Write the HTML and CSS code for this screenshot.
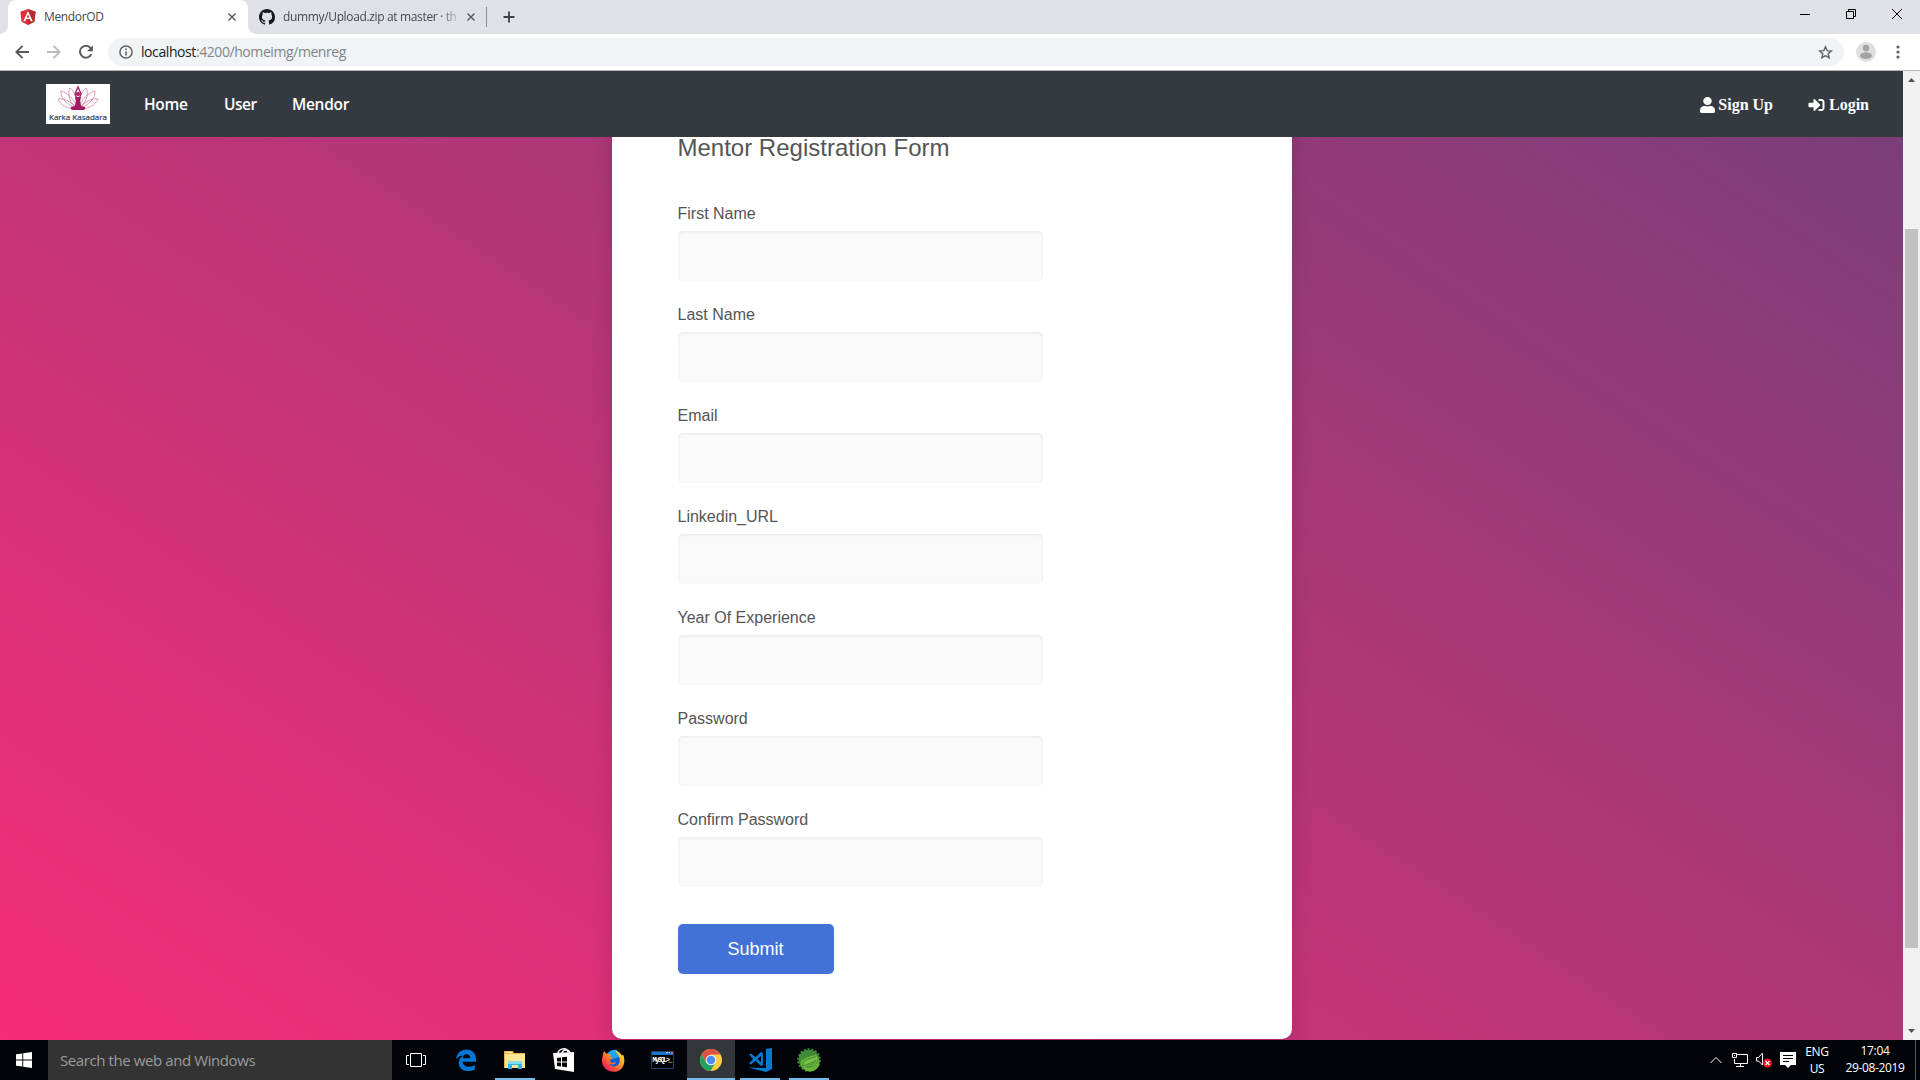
FILE: index.html
```html
<!DOCTYPE html>
<html lang="en">
<head>
<meta charset="utf-8">
<title>MendorOD</title>
<link rel="stylesheet" href="styles.css">
</head>
<body>
<div class="screen">
  <div class="tabstrip">
    <div class="tab tab-active">
      <svg class="ic16" viewBox="0 0 16 16"><path fill="#dd3038" d="M8 0l7.6 2.7-1.2 10L8 16l-6.4-3.3-1.2-10z"/><path fill="#b52e31" d="M8 0l7.6 2.7-1.2 10L8 16z"/><path fill="#fff" fill-rule="evenodd" d="M8 2l4.7 10.2h-1.9l-.9-2.3H6.1l-.9 2.3H3.300zM8 5.300L6.700 8.400h2.600z"/></svg>
      <span class="tab-title t1">MendorOD</span>
      <svg class="close" viewBox="0 0 8 8"><path d="M.5.5l7 7m0-7l-7 7"/></svg>
    </div>
    <div class="tab tab-idle">
      <svg class="ic16" viewBox="0 0 16 16"><path fill="#17191c" fill-rule="evenodd" d="M8 0C3.580 0 0 3.580 0 8c0 3.540 2.290 6.530 5.470 7.590.4.070.55-.17.55-.38 0-.19-.01-.82-.01-1.490-2.010.37-2.530-.49-2.690-.94-.09-.23-.48-.94-.82-1.130-.28-.15-.68-.52-.01-.53.63-.01 1.080.58 1.230.82.72 1.210 1.870.87 2.330.66.070-.52.28-.87.51-1.070-1.780-.2-3.640-.89-3.640-3.950 0-.87.31-1.590.82-2.150-.08-.2-.36-1.020.080-2.120 0 0 .67-.21 2.200.82.64-.18 1.320-.27 2-.27s1.360.09 2 .27c1.530-1.040 2.200-.82 2.200-.82.44 1.100.16 1.920.080 2.120.51.56.82 1.270.82 2.150 0 3.070-1.870 3.750-3.650 3.950.29.25.54.73.54 1.480 0 1.070-.01 1.930-.01 2.200 0 .21.15.46.55.38A8.010 8.010 0 0016 8c0-4.420-3.580-8-8-8z"/></svg>
      <span class="tab-title t2">dummy/Upload.zip at master · th</span>
      <svg class="close" viewBox="0 0 8 8"><path d="M.5.5l7 7m0-7l-7 7"/></svg>
    </div>
    <svg class="newtab" viewBox="0 0 12 12"><path d="M6 .5v11M.5 6h11"/></svg>
    <div class="winbtns">
      <svg width="10" height="10"><path d="M0 5.500h10"/></svg>
      <svg width="10" height="10"><path d="M.5 2.500h7v7h-7zM2.500 2.500v-2h7v7h-2"/></svg>
      <svg width="10" height="10"><path d="M0 0l10 10M10 0L0 10"/></svg>
    </div>
  </div>

  <div class="toolbar">
    <svg class="nav-ic" viewBox="0 0 14 14"><path d="M14 7H1.500M7.500.8L1.300 7l6.200 6.200"/></svg>
    <svg class="nav-ic dim" viewBox="0 0 14 14"><path d="M0 7h12.500M6.500.8L12.700 7l-6.200 6.200"/></svg>
    <svg class="nav-ic reload" viewBox="0 0 14 14"><path d="M12.300 9.100A5.900 5.900 0 1 1 11.600 3.200"/><path class="fill" d="M13.900.3v6H8z"/></svg>
    <div class="omnibox">
      <svg class="info" viewBox="0 0 14 14"><circle cx="7" cy="7" r="6.100"/><path d="M7 6.200v4.200M7 3.500v1.600"/></svg>
      <span class="url"><b>localhost</b>:4200/homeimg/menreg</span>
      <svg class="star" viewBox="0 0 14 14"><path d="M7 1.600l1.550 3.600 3.900.35-2.950 2.600.88 3.850L7 9.950 3.620 12l.88-3.850-2.950-2.600 3.900-.35z"/></svg>
    </div>
    <svg class="avatar" viewBox="0 0 20 20"><circle cx="10" cy="10" r="10" fill="#dfdfdf"/><circle cx="10" cy="6" r="3.200" fill="#a3a3a3"/><ellipse cx="10" cy="13.700" rx="5.900" ry="3.400" fill="#a3a3a3"/></svg>
    <svg class="dots" viewBox="0 0 4 14"><circle cx="2" cy="2" r="1.600"/><circle cx="2" cy="7" r="1.600"/><circle cx="2" cy="12" r="1.600"/></svg>
  </div>

  <div class="viewport">
    <div class="page">
      <nav class="navbar">
        <div class="brand">
          <svg viewBox="0 0 44 26">
            <g fill="none" stroke="#c4578f" stroke-width=".6"><path d="M22 24C12 24 5 21 2 14c6-1 12 2 20 10zM22 24C11 20 4 13 5 6c7 2 13 8 17 18zM22 24C13 18 11 8 14 3c5 4 8 11 8 21zM22 24c10 0 17-3 20-10-6-1-12 2-20 10zM22 24c11-4 18-11 17-18-7 2-13 8-17 18zM22 24c9-6 11-16 8-21-5 4-8 11-8 21z"/></g>
            <path d="M22 2l-3 7 2 5h2l2-5z" fill="none" stroke="#a5175f" stroke-width="1.300"/>
            <circle cx="22" cy="9" r="2" fill="#a5175f"/>
            <path fill="#a5175f" d="M19 12h6l-.8 4 .8 5 4 1q1 3-2 3H17q-3 0-2-3l4-1 .8-5z"/>
          </svg>
          <span>Karka Kasadara</span>
        </div>
        <a class="link l1">Home</a><a class="link l2">User</a><a class="link l3">Mendor</a>
        <a class="auth signup"><svg width="15" height="16" viewBox="0 0 448 512" preserveAspectRatio="none"><path d="M224 256c70.700 0 128-57.300 128-128S294.700 0 224 0 96 57.300 96 128s57.300 128 128 128zm89.600 32h-16.700c-22.200 10.200-46.900 16-72.900 16s-50.600-5.800-72.900-16h-16.700C60.200 288 0 348.200 0 422.400V464c0 26.500 21.500 48 48 48h352c26.500 0 48-21.500 48-48v-41.600c0-74.200-60.200-134.400-134.400-134.400z"/></svg>Sign Up</a>
        <a class="auth login"><svg width="17" height="16" viewBox="0 0 512 512"><path d="M416 448h-84c-6.600 0-12-5.400-12-12v-40c0-6.600 5.400-12 12-12h84c17.700 0 32-14.300 32-32V160c0-17.700-14.300-32-32-32h-84c-6.600 0-12-5.400-12-12V76c0-6.600 5.400-12 12-12h84c53 0 96 43 96 96v192c0 53-43 96-96 96zm-47-209L201 71c-15-15-41-4.500-41 17v96H24c-13.300 0-24 10.700-24 24v96c0 13.300 10.700 24 24 24h136v96c0 21.500 26 32 41 17l168-168c9.300-9.400 9.300-24.600 0-34z"/></svg>Login</a>
      </nav>
      <div class="scroller">
        <div class="wrapper">
          <form class="card">
            <h2>Mentor Registration Form</h2>
            <label>First Name<input type="text"></label>
            <label>Last Name<input type="text"></label>
            <label>Email<input type="text"></label>
            <label>Linkedin_URL<input type="text"></label>
            <label>Year Of Experience<input type="text"></label>
            <label>Password<input type="password"></label>
            <label>Confirm Password<input type="password"></label>
            <button type="button">Submit</button>
          </form>
        </div>
      </div>
    </div>
    <div class="scrollbar">
      <svg viewBox="0 0 17 17"><path d="M5 11h7L8.500 7z"/></svg>
      <div class="track"><div class="thumb"></div></div>
      <svg viewBox="0 0 17 17"><path d="M5 6h7l-3.500 4z"/></svg>
    </div>
  </div>

  <div class="taskbar">
    <div class="start"><svg width="16" height="16" viewBox="0 0 16 16"><path fill="#fff" d="M0 2.200L6.300 1.400v6H0zM7.200 1.200L16 0v7.400H7.200zM0 8.500h6.300v6L0 13.700zM7.200 8.500H16V16l-8.800-1.300z"/></svg></div>
    <div class="search"><span>Search the web and Windows</span></div>
    <div class="apps">
      <div class="app"><svg width="20" height="14"><path fill="none" stroke="#fff" d="M4.500.5h11v13h-11zM3 2.500H.5v9H3M17 2.500h2.500v9H17"/></svg></div>
      <div class="app"><svg width="22" height="22" viewBox="0 0 22 22"><path fill="#0078d7" d="M1 10C2 4 6 .5 11.500.5 17.500.5 21 5 21 10v2.700H7.700c.2 3.600 3.300 5 6.300 5 2.200 0 4.200-.6 5.800-1.600v4.400c-2 1-4.400 1.500-6.900 1.500C7.500 22 3.800 18.800 3.800 14c0-3.300 1.700-6.100 4.700-7.500C5.300 6.700 2.700 8 1 10zm6.800-.8h7.400c0-2.500-1.300-4-3.600-4-2.100 0-3.500 1.500-3.800 4z"/></svg></div>
      <div class="app run"><svg width="22" height="20" viewBox="0 0 22 20"><path fill="#e5b44c" d="M0 1h9l1 2h11v15H0z"/><path fill="#fce596" d="M1 4h20v14H1z"/><path fill="#fff3c0" d="M2 2h6v1H2z"/><path fill="#2bb5e8" d="M4 11h14v8h-4v-4H8v4H4z"/><path fill="#7ddcf7" d="M4 11h14v3H4z"/></svg></div>
      <div class="app"><svg width="22" height="24" viewBox="0 0 22 24"><path fill="none" stroke="#fff" stroke-width="1.500" d="M5 6c0-6 9-7 10-2M9 5c1-4 7-4 8 0"/><path fill="#fff" d="M0 5l21-1v20L2 21z"/><path fill="#000" d="M4 10l4-.5v4H4zM9 9.300l5-.6v4.800H9zM4 14.500h4v4L4 18zM9 14.500h5v4.700l-5-.6z"/></svg></div>
      <div class="app"><svg width="24" height="24" viewBox="0 0 24 24"><defs><linearGradient id="fx" x1="1" y1="0" x2="0" y2="1"><stop offset="0" stop-color="#fff44f"/><stop offset=".4" stop-color="#ff9a20"/><stop offset=".75" stop-color="#ff3647"/><stop offset="1" stop-color="#e31587"/></linearGradient></defs><circle cx="12" cy="12" r="8.500" fill="#0a5cd6"/><path fill="#1aa7f0" d="M6 6c2-4 7-5 10-4l2 7-6 2z"/><path fill="url(#fx)" d="M3 3l3 3 4 .2-1 2.300 3 1.500-3 2c0 3 4 3.500 6 2-1 3-5 3-7 1.500 2 4 8 4 10 0 2-4 0-8-4-13 5 1 6 4 7 5l1-1c3 6 1 15-6 16.900C8 25 1 20 1 13 1 9 2 8 2 6z"/></svg></div>
      <div class="app"><svg width="23" height="18" viewBox="0 0 23 18"><path fill="#000" stroke="#22406b" d="M.5.5h22v17H.5z"/><path fill="#1b75c9" d="M1 1h21v3H1z"/><path fill="#cdd" d="M15 1h2v1h-2zM18 1h1v1h-1z"/><path fill="#e55" d="M20 1h2v2h-2z"/><text x="1.500" y="11" class="mysql" textLength="20">MySQL&gt;_</text></svg></div>
      <div class="app active"><svg width="22" height="22" viewBox="0 0 22 22"><circle cx="11" cy="11" r="11" fill="#ffcd42"/><path fill="#dd5144" d="M1.500 5.500A11 11 0 0 1 20.500 5.500H11L6 13z"/><path fill="#1da362" d="M1.500 5.500A11 11 0 0 0 10.500 22l5-8.500L11 16l-4.800-2.300z"/><circle cx="11" cy="11" r="5.300" fill="#f1f1f1"/><circle cx="11" cy="11" r="4.200" fill="#4c8bf5"/></svg></div>
      <div class="app run"><svg width="24" height="24" viewBox="0 0 24 24"><path fill="#007acc" d="M18 1l6-1v21l-6 3-18-4.500 18 .5zM1 6.500l2-1 4.500 3.700L13 4l2 1v12l-2 1-5.500-5.200L3 16.500l-2-1L5 11zm8.500 4.500L13 14V8z"/></svg></div>
      <div class="app run"><svg width="24" height="24" viewBox="0 0 24 24"><circle cx="12" cy="12" r="10.300" fill="#3f8a37" stroke="#3f8a37" stroke-width="3" stroke-dasharray="2 1.600"/><circle cx="13" cy="14" r="9.600" fill="#6cb33e"/><path fill="#3f8a37" d="M2 8C7 0 16 1 20 5 20 8 6 8 3 15z"/><path fill="#79c145" stroke="#3f8a37" d="M6 18c-1-8 8-6 15-11 1 8-4 13-11 12 5-2 8-4 9-7-3 3-8 4-13 6z"/></svg></div>
    </div>
    <div class="tray">
      <svg width="12" height="8"><path d="M.5 7L6 1.500 11.500 7"/></svg>
      <svg width="16" height="14"><path d="M5 1.500h10.500v9H2.500V6M8.500 11v2M4 13.500h8M.5.500h4v4h-4zM2 2.500h1"/></svg>
      <svg width="16" height="16"><path d="M.5 5.500h2L6.500 1v12l-4-4h-2z"/><circle cx="11.500" cy="11" r="4.500" fill="#e81123" stroke="none"/><path d="M9.500 9l4 4m0-4l-4 4" stroke-width="1.200"/></svg>
      <svg width="16" height="16"><path fill="#fff" stroke="none" d="M0 0h16v13h-5l-3 3-3-3H0z"/><path stroke="#000" d="M3 3.500h10M3 6.500h10M3 9.500h6"/></svg>
      <div class="two lang"><span>ENG</span><span>US</span></div>
      <div class="two clock"><span class="time">17:04</span><span>29-08-2019</span></div>
    </div>
    <div class="peek"></div>
  </div>
</div>
</body>
</html>
```
FILE: styles.css
```css
* { box-sizing: border-box; }
body { margin: 0; overflow: hidden; font-family: "Open Sans", "Noto Sans", sans-serif; }
svg { display: block; flex: none; }
.screen { width: 1920px; height: 1080px; display: flex; flex-direction: column; overflow: hidden; }

.tabstrip { height: 34px; flex: none; background: #dee1e6; display: flex; align-items: center; padding-left: 8px; }
.tab { height: 34px; display: flex; align-items: center; font-size: 12px; color: #45494d; white-space: nowrap; position: relative; }
.tab-active { width: 240px; background: #fff; border-radius: 8px 8px 0 0; padding: 0 12px; }
.tab-active::before, .tab-active::after { content: ""; position: absolute; bottom: 0; width: 8px; height: 8px; }
.tab-active::before { left: -8px; background: radial-gradient(circle at 0 0, transparent 7.5px, #fff 8px); }
.tab-active::after { right: -8px; background: radial-gradient(circle at 100% 0, transparent 7.500px, #fff 8px); }
.tab-idle { width: 239px; padding: 0 11px 0 11px; border-right: 1px solid #8a8d91; height: 20px; }
.ic16 { width: 16px; height: 16px; }
.tab-title { margin-left: 8px; margin-top: -1px; flex: 1; overflow: hidden; }
.t1 { letter-spacing: -.35px; }
.t2 { flex: none; width: 176px; letter-spacing: -.35px; -webkit-mask-image: linear-gradient(90deg, #000 157px, transparent 178px); mask-image: linear-gradient(90deg, #000 157px, transparent 178px); }
.close { width: 8px; height: 8px; stroke: #50545a; stroke-width: 1.4; fill: none; }
.tab-idle .close { margin-left: 8px; }
.newtab { width: 12px; height: 12px; margin-left: 16px; stroke: #3c4043; stroke-width: 1.8; }
.winbtns { margin-left: auto; display: flex; gap: 36px; padding-right: 18px; margin-top: -6px; stroke: #000; fill: none; }

.toolbar { height: 37px; flex: none; background: #fff; border-bottom: 1px solid #b4b5b7; display: flex; align-items: center; padding: 0 20px 0 15px; }
.nav-ic { width: 14px; height: 14px; fill: none; stroke: #55595e; stroke-width: 1.9; margin-right: 18px; }
.nav-ic.dim { stroke: #b9bbbe; }
.nav-ic.reload { margin-right: 15px; }
.nav-ic .fill { fill: #55595e; stroke: none; }
.omnibox { flex: 1; height: 28px; border-radius: 14px; background: #f1f3f4; display: flex; align-items: center; padding: 0 11px; }
.info { width: 14px; height: 14px; fill: none; stroke: #5f6368; stroke-width: 1.5; }
.url { font-size: 14px; letter-spacing: -.42px; margin: -1px 0 0 8px; color: #80868b; white-space: nowrap; }
.url b { font-weight: 400; color: #202124; }
.star { width: 15px; height: 15px; margin-left: auto; fill: none; stroke: #5f6368; stroke-width: 1.3; }
.avatar { width: 20px; height: 20px; margin-left: 12px; }
.dots { width: 4px; height: 14px; margin-left: 20px; fill: #5f6368; }

.viewport { height: 969px; flex: none; display: flex; }
.page { width: 1903px; display: flex; flex-direction: column; overflow: hidden; }
.navbar { height: 66px; flex: none; background: #343a40; display: flex; align-items: center; padding: 0 34px 0 46px; position: relative; z-index: 1; color: #fff; }
.brand { width: 64px; height: 40px; margin-right: 34px; background: #fff; overflow: hidden; display: flex; flex-direction: column; align-items: center; }
.brand svg { width: 44px; height: 26px; margin-top: 1px; }
.brand span { font: 8px/11px "Open Sans", sans-serif; color: #24456b; white-space: nowrap; -webkit-text-stroke: .2px #24456b; }
.link { font-weight: 600; font-size: 15.500px; white-space: nowrap; }
.l1 { width: 80px; letter-spacing: -.3px; }
.l2 { width: 68px; letter-spacing: -.5px; }
.l3 { letter-spacing: -.3px; }
.auth { display: flex; align-items: center; font: bold 16px "Liberation Serif", serif; gap: 4px; fill: #fff; margin-top: 2px; }
.auth svg { margin-top: -1px; }
.signup { margin-left: auto; margin-right: 35px; gap: 3px; }
.scroller { flex: 1; min-height: 0; overflow: hidden; }
.wrapper { height: 1260px; margin-top: -256px; padding-top: 130px; background: linear-gradient(to top right, #fc2c77 0%, #6c4079 100%); }
.card { width: 680px; height: 1028px; margin: 0 auto; background: #fff; border-radius: 10px; box-shadow: 0 8px 20px rgba(0,0,0,.15); padding: 126px 65px 0 66px; display: flex; flex-direction: column; align-items: flex-start; font-family: "Liberation Sans", Arial, sans-serif; color: #555; }
.card h2 { font-size: 24px; line-height: 22px; font-weight: 400; margin: 0 0 44px; }
.card label { font-size: 16px; line-height: 22px; display: flex; flex-direction: column; gap: 6px; margin-bottom: 23px; }
.card input { width: 365px; height: 50px; border: 0; border-radius: 5px; background: #fafafa; box-shadow: inset 0 1px 3px rgba(0,0,0,.08); }
.card button { width: 156px; height: 50px; margin-top: 14px; border: 0; border-radius: 5px; background: #4272d7; color: #fff; font: 18px "Liberation Sans", Arial, sans-serif; }
.scrollbar { width: 17px; background: #f1f1f1; display: flex; flex-direction: column; fill: #505050; }
.scrollbar svg { width: 17px; height: 17px; }
.track { flex: 1; padding: 141px 2px 0; }
.thumb { height: 719px; background: #c1c1c1; }

.taskbar { height: 40px; flex: none; background: #010409; display: flex; color: #fff; }
.start { width: 48px; display: flex; align-items: center; justify-content: center; }
.search { width: 344px; background: #333; display: flex; align-items: center; padding-left: 12px; color: #9b9b9b; font-size: 15px; letter-spacing: -.41px; white-space: nowrap; }
.apps { display: flex; }
.app { width: 48px; height: 40px; margin-right: 1px; display: flex; align-items: center; justify-content: center; }
.app:first-child { margin-right: 2px; }
.run { background: linear-gradient(#76b9ed, #76b9ed) center bottom / 40px 2px no-repeat; }
.active { background: #33373b; border-bottom: 2px solid #76b9ed; padding-top: 2px; }
.mysql { font: bold 7px "Liberation Mono", monospace; fill: #fff; }
.tray { margin-left: auto; display: flex; align-items: center; fill: none; stroke: #fff; gap: 8px; }
.tray > svg:first-child { margin-right: 2px; }
.two { display: flex; flex-direction: column; align-items: center; font-size: 12px; line-height: 17px; letter-spacing: -.35px; white-space: nowrap; }
.lang { width: 26px; margin-top: -1px; }
.clock { width: 58px; margin: -3px 0 0 8px; }
.peek { width: 5px; margin-left: 11px; border-left: 1px solid #55585c; }
```
